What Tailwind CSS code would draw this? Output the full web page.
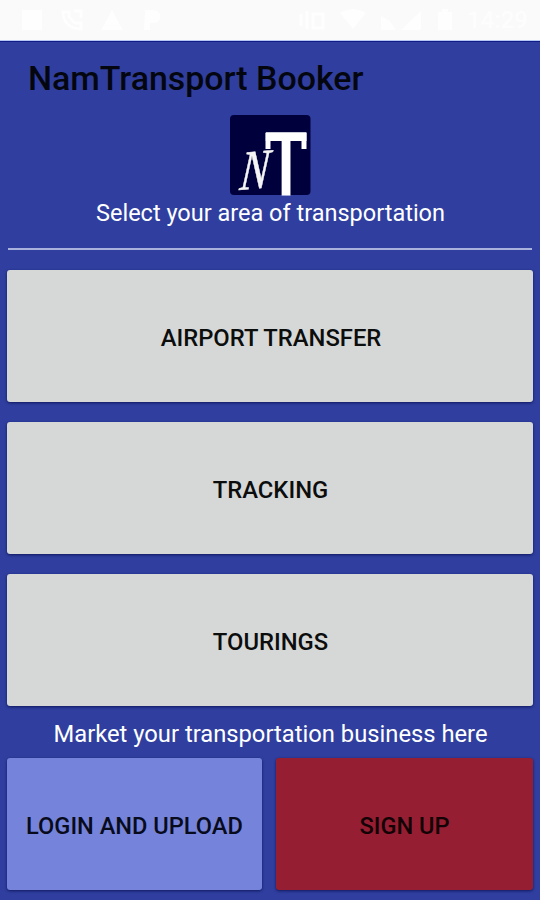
<!DOCTYPE html>
<html lang="en">
<head>
  <meta charset="UTF-8" />
  <meta name="viewport" content="width=device-width, initial-scale=1.0" />
  <title>NamTransport Booker</title>
  <script src="https://cdn.jsdelivr.net/npm/@tailwindcss/browser@4"></script>
</head>
<body class="bg-[#303f9f] font-['Roboto',sans-serif] w-[540px] h-[900px] overflow-hidden flex flex-col">

  <!-- Status Bar -->
  <div class="h-[41px] shrink-0 bg-[#fafafa] border-b border-[#b5c8f5] flex items-center justify-between pl-5 pr-3 text-white/70">
    <div class="flex items-center gap-4">
      <svg class="w-6 h-6" viewBox="0 0 24 24" fill="currentColor"><path d="M2 2h20v20H2z" /></svg>
      <svg class="w-6 h-6" viewBox="0 0 24 24" fill="none" stroke="currentColor" stroke-width="3"><path d="M3 4h6v5l6 6h6v6C10 21 3 14 3 4zM14 3h7v7" /></svg>
      <svg class="w-6 h-6" viewBox="0 0 24 24" fill="currentColor"><path d="M12 2l11 20H1z" /></svg>
      <svg class="w-6 h-6" viewBox="0 0 24 24" fill="currentColor"><path d="M5 2h9a6 6 0 0 1 0 13h-4v7H4z" /></svg>
    </div>
    <div class="flex items-center gap-3">
      <svg class="w-7 h-6" viewBox="0 0 28 24" fill="none" stroke="currentColor" stroke-width="3"><path d="M2 6v12M8 3v18M14 6h10v14H14z" /></svg>
      <svg class="w-7 h-6" viewBox="0 0 28 24" fill="currentColor"><path d="M1 5q13-8 26 0L14 21z" /></svg>
      <svg class="w-11 h-6" viewBox="0 0 44 24" fill="currentColor"><path d="M2 8l9 5 6 9H2zM42 3v19H22z" /></svg>
      <svg class="w-5 h-6" viewBox="0 0 20 24" fill="currentColor"><path d="M7 1h6v3h4v18H3V4h4z" /></svg>
      <span class="text-2xl leading-6 font-medium">14:29</span>
    </div>
  </div>

  <!-- Header -->
  <header class="shrink-0 border-t border-[#101c86] pt-[17px]">
    <h1 class="pl-7 text-[33.9px] leading-10 font-medium text-[#04060f]">NamTransport Booker</h1>
    <svg class="block mx-auto mt-[15px] mb-px w-[82px] h-[82px] overflow-visible" viewBox="0 0 82 82">
      <rect x="1" y="1" width="80.5" height="80" rx="4" fill="#00003c" />
      <!-- T with two small serifs under the bar -->
      <text transform="translate(35.2 82) scale(.81 1)" font-family="Roboto" font-weight="500" font-size="88.5" fill="#fff">T</text>
      <path d="M36.5 19h5v16h-5zM72.5 19h5v16h-5z" fill="#fff" />
      <text transform="translate(10 76) rotate(-5) skewX(-10) scale(.78 1)" font-family="Liberation Serif" font-style="italic" font-size="56" fill="#f4f4f4" stroke="#f4f4f4" stroke-width=".5">N</text>
    </svg>
    <p class="pl-px text-center text-[23.5px] leading-8 text-white">Select your area of transportation</p>
  </header>

  <!-- Divider -->
  <div class="shrink-0 mx-2 mt-[19px] h-0.5 bg-[#a9b2dc]"></div>

  <!-- Transport Areas -->
  <main class="shrink-0 mt-5 mx-[7px] flex flex-col gap-5 text-[23.8px] font-medium text-[#0c0d0d]">
    <button class="h-[132px] pt-1.5 pl-0.5 rounded-[3px] bg-[#d6d8d7] shadow-[0_1px_3px_#10185e]">AIRPORT TRANSFER</button>
    <button class="h-[132px] pt-1.5 pl-px rounded-[3px] bg-[#d6d8d7] shadow-[0_1px_3px_#10185e]">TRACKING</button>
    <button class="h-[132px] pt-1.5 pl-px rounded-[3px] bg-[#d6d8d7] shadow-[0_1px_3px_#10185e]">TOURINGS</button>
  </main>

  <!-- Business Section -->
  <p class="shrink-0 mt-3 pl-px text-center text-[23.75px] leading-8 text-white">Market your transportation business here</p>
  <div class="shrink-0 mt-2 mx-[7px] flex gap-[14px] text-[23.6px] font-medium">
    <button class="w-[255px] h-[132px] pt-1.5 rounded-[3px] bg-[#7584da] text-[#080b1c] shadow-[0_1px_3px_#10185e]">LOGIN AND UPLOAD</button>
    <button class="flex-1 h-[132px] pt-1.5 rounded-[3px] bg-[#961e32] text-[#120205] shadow-[0_1px_3px_#10185e]">SIGN UP</button>
  </div>

</body>
</html>
